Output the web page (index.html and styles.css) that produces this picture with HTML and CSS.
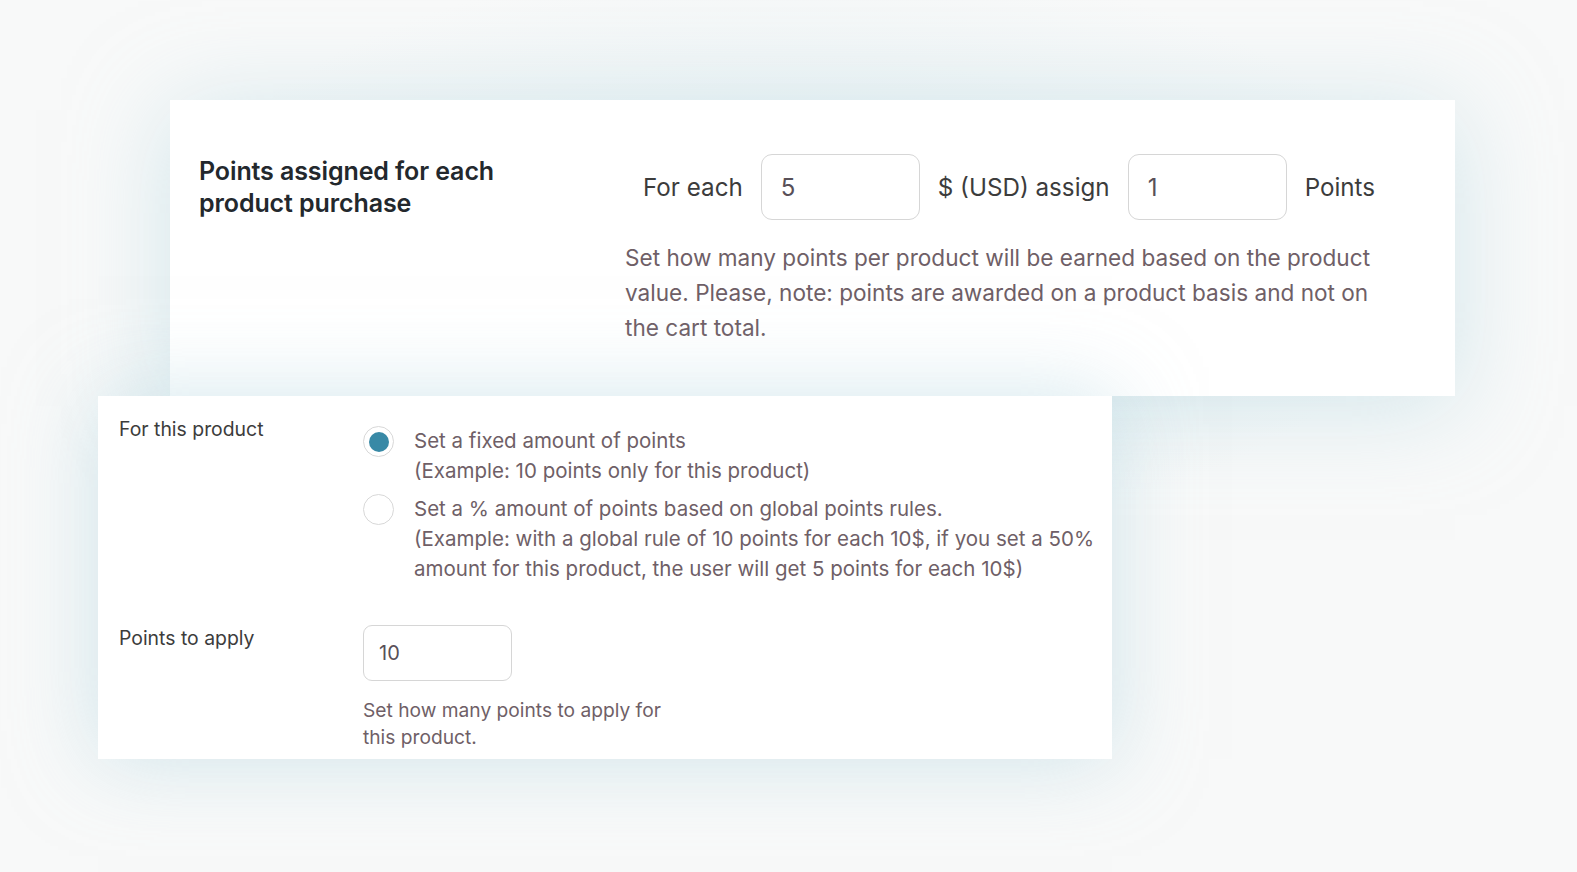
FILE: index.html
```html
<!DOCTYPE html>
<html lang="en">
<head>
<meta charset="utf-8">
<title>Points settings</title>
<link rel="stylesheet" href="styles.css">
</head>
<body>
<main class="canvas">
  <section class="card card-global">
    <h2 class="global-title">Points assigned for each product purchase</h2>
    <div class="global-body">
      <div class="rule-row">
        <span class="rule-text">For each</span>
        <div class="rule-input">5</div>
        <span class="rule-text">$ (USD) assign</span>
        <div class="rule-input">1</div>
        <span class="rule-text">Points</span>
      </div>
      <p class="global-desc">Set how many points per product will be earned based on the product value. Please, note: points are awarded on a product basis and not on the cart total.</p>
    </div>
  </section>

  <section class="card card-product">
    <div class="field-row">
      <div class="field-label">For this product</div>
      <div class="field-control options">
        <div class="option">
          <span class="radio checked"></span>
          <div class="option-text">Set a fixed amount of points<br>(Example: 10 points only for this product)</div>
        </div>
        <div class="option">
          <span class="radio"></span>
          <div class="option-text">Set a % amount of points based on global points rules.<br>(Example: with a global rule of 10 points for each 10$, if you set a 50% amount for this product, the user will get 5 points for each 10$)</div>
        </div>
      </div>
    </div>
    <div class="field-row row-points">
      <div class="field-label">Points to apply</div>
      <div class="field-control">
        <div class="small-input">10</div>
        <p class="help">Set how many points to apply for this product.</p>
      </div>
    </div>
  </section>
</main>
</body>
</html>
```
FILE: styles.css
```css
* { box-sizing: border-box; }
html, body {
  margin: 0;
  padding: 0;
}
body {
  width: 1577px;
  height: 872px;
  overflow: hidden;
  background: #f8f9f9;
  font-family: Inter, "Noto Sans", "Liberation Sans", sans-serif;
}
.canvas {
  position: relative;
  width: 1577px;
  height: 872px;
  background:
    radial-gradient(ellipse 900px 420px at 800px 250px, rgba(222, 236, 240, 0.7), rgba(248, 249, 249, 0) 70%),
    #f8f9f9;
}
.card {
  position: absolute;
  background: #fff;
}
.card-global {
  left: 170px;
  top: 100px;
  width: 1285px;
  height: 296px;
  display: flex;
  padding: 55px 0 0 29px;
  box-shadow: 0 10px 90px rgba(180, 215, 224, 0.55);
}
.global-title {
  flex: none;
  margin: 0;
  width: 426px;
  padding-right: 90px;
  font-size: 25px;
  line-height: 32px;
  font-weight: 600;
  color: #23282d;
  letter-spacing: -0.1px;
}
.global-body {
  display: flex;
  flex-direction: column;
}
.rule-row {
  display: flex;
  align-items: center;
  gap: 18px;
  margin-left: 18px;
  margin-top: -1px;
}
.rule-text {
  font-size: 24.2px;
  color: #3c3c3c;
}
.rule-input {
  width: 159px;
  height: 66px;
  border: 1.5px solid #d6d6d6;
  border-radius: 11px;
  padding-left: 19px;
  display: flex;
  align-items: center;
  font-size: 24px;
  color: #585058;
}
.global-desc {
  margin: 20px 0 0 0;
  width: 754px;
  font-size: 22.6px;
  line-height: 35px;
  color: #6f5f67;
}
.card-product {
  left: 98px;
  top: 396px;
  width: 1014px;
  height: 363px;
  padding: 21px 0 0 21px;
  box-shadow: 0 0 80px rgba(175, 212, 222, 0.55);
}
.field-row {
  display: flex;
}
.field-label {
  flex: none;
  width: 244px;
  font-size: 19.4px;
  line-height: 24px;
  color: #3c3c3c;
}
.options {
  display: flex;
  flex-direction: column;
  gap: 9px;
  padding-top: 10px;
}
.option {
  display: flex;
  gap: 20px;
  align-items: flex-start;
}
.radio {
  flex: none;
  width: 31px;
  height: 31px;
  border-radius: 50%;
  border: 1.5px solid #d8d8d8;
  background: #fff;
  display: flex;
  align-items: center;
  justify-content: center;
  margin-top: -1px;
}
.radio.checked::after {
  content: "";
  width: 20px;
  height: 20px;
  border-radius: 50%;
  background: #3889a6;
}
.option-text {
  font-size: 20.5px;
  line-height: 30px;
  color: #6f5f67;
  width: 690px;
  margin-top: -1px;
}
.row-points {
  margin-top: 41px;
}
.row-points .field-label {
  padding-top: 1px;
}
.small-input {
  width: 149px;
  height: 56px;
  border: 1.5px solid #d6d6d6;
  border-radius: 9px;
  padding-left: 15px;
  display: flex;
  align-items: center;
  font-size: 20px;
  color: #585058;
}
.help {
  margin: 16px 0 0 0;
  width: 320px;
  font-size: 19.2px;
  line-height: 27px;
  color: #6f5f67;
}
```
